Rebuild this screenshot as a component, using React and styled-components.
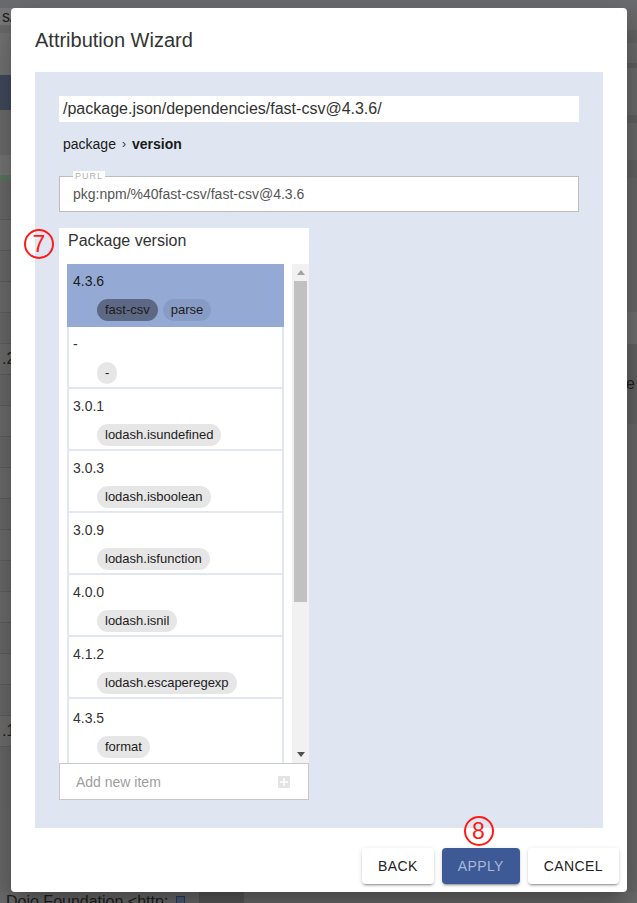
import React from "react";
import styled, { createGlobalStyle } from "styled-components";

const GlobalStyle = createGlobalStyle`
  html, body {
    margin: 0;
    padding: 0;
  }
  body {
    font-family: "Liberation Sans", Arial, sans-serif;
    background: #6b6b6b;
  }
  * {
    box-sizing: border-box;
  }
`;

const Screen = styled.div`
  position: relative;
  width: 637px;
  height: 903px;
  overflow: hidden;
  background: #6b6b6b;
`;

/* dimmed app behind the dialog */
const Backdrop = styled.div`
  display: flex;
  flex-direction: column;
  height: 100%;
  color: #1e1e1e;
`;

const BackdropTop = styled.div`
  height: 8px;
  flex-shrink: 0;
  background: #6c6d71;
`;

const BackdropMain = styled.div`
  flex: 1;
  display: flex;
  justify-content: space-between;
  overflow: hidden;
`;

const Pane = styled.div`
  width: 140px;
  display: flex;
  flex-direction: column;
`;

const PaneRow = styled.div`
  flex-shrink: 0;
  height: ${(p) => p.$h}px;
  background: ${(p) => p.$bg};
  border-bottom: ${(p) => (p.$line ? "1px solid #606060" : "none")};
  display: flex;
  align-items: center;
  justify-content: ${(p) => (p.$right ? "flex-end" : "flex-start")};
  padding: 0 2px;
  font-size: 16px;
  color: #222;
`;

const BackdropFooter = styled.div`
  height: 11px;
  flex-shrink: 0;
  display: flex;
  align-items: flex-start;
  gap: 6px;
  background: #6e6e6e;
  padding-left: 6px;
  font-size: 16px;
  line-height: 20px;
  color: #1f1f1f;
  overflow: hidden;
`;

const FooterIcon = styled.span`
  margin: 4px 0 0 2px;
  width: 9px;
  height: 10px;
  border: 1px solid #2d3f66;
  background: #52607c;
  flex-shrink: 0;
`;

const FooterBand = styled.span`
  margin-left: 8px;
  width: 45px;
  height: 11px;
  background: #5c5c5c;
`;

/* dialog */
const Dialog = styled.div`
  position: absolute;
  top: 8px;
  left: 11px;
  width: 616px;
  height: 884px;
  background: #fff;
  border-radius: 4px;
  box-shadow: 0 11px 15px -7px rgba(0, 0, 0, 0.2),
    0 24px 38px 3px rgba(0, 0, 0, 0.14), 0 9px 46px 8px rgba(0, 0, 0, 0.12);
  display: flex;
  flex-direction: column;
  padding-bottom: 8px;
`;

const Title = styled.h2`
  margin: 20px 24px 0;
  height: 24px;
  font-size: 20px;
  line-height: 24px;
  font-weight: 400;
  color: #333;
`;

const Panel = styled.div`
  margin: 20px 24px 0;
  height: 756px;
  background: #e0e6f1;
  padding: 24px;
  display: flex;
  flex-direction: column;
`;

const PathField = styled.div`
  height: 26px;
  background: #fff;
  padding: 0 4px;
  font-size: 16px;
  line-height: 26px;
  color: #333;
`;

const Breadcrumb = styled.div`
  margin-top: 12px;
  padding-left: 4px;
  height: 20px;
  display: flex;
  align-items: center;
  gap: 6px;
  font-size: 14px;
  color: #1a1a1a;
`;

const Crumb = styled.span`
  font-weight: ${(p) => (p.$current ? 700 : 400)};
`;

const Separator = styled.span`
  font-size: 12px;
  color: #333;
`;

const Outlined = styled.div`
  position: relative;
  margin-top: 22px;
  height: 36px;
  background: #fff;
  border: 1px solid #bdbdbd;
  display: flex;
  align-items: center;
  padding-left: 13px;
  font-size: 14px;
  color: #555;
`;

const FieldLabel = styled.span`
  position: absolute;
  top: -6px;
  left: 13px;
  padding: 0 2px;
  background: #fff;
  font-size: 9px;
  line-height: 10px;
  letter-spacing: 1px;
  color: #b3b3b3;
`;

const ListCard = styled.div`
  position: relative;
  margin-top: 16px;
  width: 250px;
  background: #fff;
  display: flex;
  flex-direction: column;
`;

const CardTitle = styled.div`
  height: 36px;
  padding: 3px 9px 0;
  font-size: 16px;
  line-height: 20px;
  color: #333;
`;

const ListArea = styled.div`
  height: 499px;
  display: flex;
  padding-left: 8px;
`;

const Items = styled.div`
  width: 217px;
  margin-right: 8px;
  overflow: hidden;
  display: flex;
  flex-direction: column;
`;

const Item = styled.div`
  flex-shrink: 0;
  height: 62px;
  border: 2px solid ${(p) => (p.$selected ? "#94a9d4" : "#e1e7f2")};
  border-top: none;
  background: ${(p) => (p.$selected ? "#94a9d4" : "#fff")};
  padding: 8px 0 0 4px;

  &:first-child {
    height: 63px;
  }
  &:last-child {
    flex: 1;
    border-bottom: none;
    padding-top: 10px;
  }
`;

const Version = styled.div`
  height: 18px;
  font-size: 14px;
  line-height: 18px;
  color: ${(p) => (p.$selected ? "#1c1c1c" : "#333")};
`;

const Chips = styled.div`
  display: flex;
  gap: 5px;
  margin: 9px 0 0 24px;
`;

const chipTone = {
  active: "#5d6984",
  muted: "#889bc4",
  plain: "#e6e6e6",
};

const Chip = styled.span`
  height: 22px;
  padding: 0 8px;
  border-radius: 11px;
  background: ${(p) => chipTone[p.$tone]};
  font-size: 13px;
  line-height: 22px;
  color: #1c1c1c;
`;

const Scrollbar = styled.div`
  width: 17px;
  background: #f1f1f1;
  display: flex;
  flex-direction: column;
`;

const ScrollButton = styled.div`
  height: 17px;
  display: flex;
  align-items: center;
  justify-content: center;
`;

const Track = styled.div`
  flex: 1;
  padding: 0 2px;
`;

const Thumb = styled.div`
  height: 321px;
  background: #c1c1c1;
`;

const AddRow = styled.div`
  height: 37px;
  border: 1px solid #c8c8c8;
  display: flex;
  align-items: center;
  justify-content: space-between;
  padding: 0 18px 0 16px;
  font-size: 14px;
  color: #9e9e9e;
`;

const PlusBox = styled.span`
  width: 12px;
  height: 12px;
  background: #e3e3e3;
  display: flex;
  align-items: center;
  justify-content: center;
`;

const Marker = styled.span`
  position: absolute;
  top: ${(p) => p.$top}px;
  left: ${(p) => p.$left}px;
  width: 30px;
  height: 30px;
  border: 2px solid #ff1a1a;
  border-radius: 50%;
  display: flex;
  align-items: center;
  justify-content: center;
  font-size: 23px;
  line-height: 26px;
  color: #ff1a1a;
`;

const Actions = styled.div`
  margin-top: 20px;
  padding: 0 8px;
  display: flex;
  justify-content: flex-end;
  gap: 8px;
`;

const Button = styled.button`
  position: relative;
  height: 36px;
  padding: 0 16px;
  border: none;
  border-radius: 4px;
  font-family: "Liberation Sans", Arial, sans-serif;
  font-size: 14px;
  letter-spacing: 0.4px;
  text-transform: uppercase;
  background: ${(p) => (p.$primary ? "#3d5a96" : "#fff")};
  color: ${(p) => (p.$primary ? "#a9b8d8" : "#222")};
  box-shadow: 0 3px 1px -2px rgba(0, 0, 0, 0.2), 0 2px 2px 0 rgba(0, 0, 0, 0.14),
    0 1px 5px 0 rgba(0, 0, 0, 0.12);
`;

const leftRows = [
  { h: 17, bg: "#7b7b7b", text: "s/" },
  { h: 8, bg: "#6c6c6c" },
  { h: 42, bg: "#757575" },
  { h: 35, bg: "#434b5f" },
  { h: 45, bg: "#6e6e6e" },
  { h: 20, bg: "#787878" },
  { h: 5, bg: "#5b7a5f" },
  { h: 40, bg: "#6c6c6c", line: true },
  { h: 31, bg: "#707070", line: true },
  { h: 31, bg: "#6c6c6c", line: true },
  { h: 31, bg: "#6e6e6e", line: true },
  { h: 31, bg: "#6b6b6b", line: true },
  { h: 31, bg: "#6e6e6e", text: ".2", line: true },
  { h: 31, bg: "#6b6b6b", line: true },
  { h: 31, bg: "#6e6e6e", line: true },
  { h: 31, bg: "#6b6b6b", line: true },
  { h: 31, bg: "#6e6e6e", line: true },
  { h: 31, bg: "#6b6b6b", line: true },
  { h: 31, bg: "#6e6e6e", line: true },
  { h: 31, bg: "#6b6b6b", line: true },
  { h: 31, bg: "#6e6e6e", line: true },
  { h: 31, bg: "#6b6b6b", line: true },
  { h: 31, bg: "#6e6e6e", line: true },
  { h: 31, bg: "#6b6b6b", line: true },
  { h: 31, bg: "#707070", text: ".1", line: true },
  { h: 60, bg: "#6a6a6a" },
];

const rightRows = [
  { h: 22, bg: "#6b6b6b" },
  { h: 13, bg: "#656565" },
  { h: 20, bg: "#6c6c6c" },
  { h: 5, bg: "#616161" },
  { h: 47, bg: "#6d6d6d" },
  { h: 8, bg: "#626262" },
  { h: 37, bg: "#6c6c6c" },
  { h: 18, bg: "#646464" },
  { h: 134, bg: "#6a6a6a" },
  { h: 32, bg: "#727272" },
  { h: 80, bg: "#646464", text: "e" },
  { h: 480, bg: "#6a6a6a" },
];

const versions = [
  { version: "4.3.6", tags: ["fast-csv", "parse"], selected: true },
  { version: "-", tags: ["-"] },
  { version: "3.0.1", tags: ["lodash.isundefined"] },
  { version: "3.0.3", tags: ["lodash.isboolean"] },
  { version: "3.0.9", tags: ["lodash.isfunction"] },
  { version: "4.0.0", tags: ["lodash.isnil"] },
  { version: "4.1.2", tags: ["lodash.escaperegexp"] },
  { version: "4.3.5", tags: ["format"] },
];

const Arrow = ({ up, color }) => (
  <svg width="8" height="5" viewBox="0 0 8 5">
    <path d={up ? "M0 5 L4 0 L8 5 Z" : "M0 0 L8 0 L4 5 Z"} fill={color} />
  </svg>
);

const chipToneFor = (item, i) => {
  if (!item.selected) return "plain";
  return i === 0 ? "active" : "muted";
};

const App = () => (
  <>
    <GlobalStyle />
    <Screen>
      <Backdrop>
        <BackdropTop />
        <BackdropMain>
          <Pane>
            {leftRows.map((r, i) => (
              <PaneRow key={i} $h={r.h} $bg={r.bg} $line={r.line}>
                {r.text}
              </PaneRow>
            ))}
          </Pane>
          <Pane>
            {rightRows.map((r, i) => (
              <PaneRow key={i} $h={r.h} $bg={r.bg} $right>
                {r.text}
              </PaneRow>
            ))}
          </Pane>
        </BackdropMain>
        <BackdropFooter>
          Dojo Foundation &lt;http:
          <FooterIcon />
          <FooterBand />
        </BackdropFooter>
      </Backdrop>

      <Dialog>
        <Title>Attribution Wizard</Title>
        <Panel>
          <PathField>/package.json/dependencies/fast-csv@4.3.6/</PathField>
          <Breadcrumb>
            <Crumb>package</Crumb>
            <Separator>›</Separator>
            <Crumb $current>version</Crumb>
          </Breadcrumb>
          <Outlined>
            <FieldLabel>PURL</FieldLabel>
            pkg:npm/%40fast-csv/fast-csv@4.3.6
          </Outlined>
          <ListCard>
            <Marker $top={1} $left={-35}>7</Marker>
            <CardTitle>Package version</CardTitle>
            <ListArea>
              <Items>
                {versions.map((v) => (
                  <Item key={v.version} $selected={v.selected}>
                    <Version $selected={v.selected}>{v.version}</Version>
                    <Chips>
                      {v.tags.map((t, i) => (
                        <Chip key={t} $tone={chipToneFor(v, i)}>
                          {t}
                        </Chip>
                      ))}
                    </Chips>
                  </Item>
                ))}
              </Items>
              <Scrollbar>
                <ScrollButton>
                  <Arrow up color="#a3a3a3" />
                </ScrollButton>
                <Track>
                  <Thumb />
                </Track>
                <ScrollButton>
                  <Arrow color="#505050" />
                </ScrollButton>
              </Scrollbar>
            </ListArea>
            <AddRow>
              Add new item
              <PlusBox>
                <svg width="8" height="8" viewBox="0 0 8 8">
                  <path d="M4 0 V8 M0 4 H8" stroke="#fff" strokeWidth="1.5" />
                </svg>
              </PlusBox>
            </AddRow>
          </ListCard>
        </Panel>
        <Actions>
          <Button>Back</Button>
          <Button $primary>
            <Marker $top={-32} $left={22}>8</Marker>
            Apply
          </Button>
          <Button>Cancel</Button>
        </Actions>
      </Dialog>
    </Screen>
  </>
);

export default App;
